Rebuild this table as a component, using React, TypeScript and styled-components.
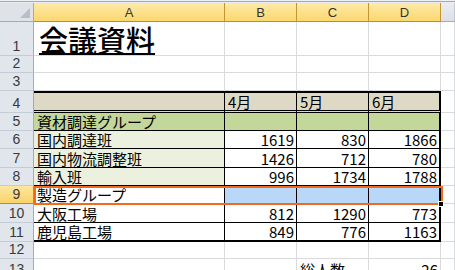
import React from "react";
import styled, { createGlobalStyle } from "styled-components";

const GlobalStyle = createGlobalStyle`
  html, body { margin: 0; padding: 0; background: #fff; }
  body { font-family: "Noto Sans CJK JP", "Liberation Sans", sans-serif; }
`;

const GRID = "1px solid #d9dadb";
const INK = "1px solid #000";
const BEIGE = "#ddd9c4";
const GREEN = "#c4d79b";
const PALE = "#ebf1de";
const BLUE = "#b9d8f9";

const rowHeights = [34, 17, 18, 22, 18, 18, 19, 18, 18, 19, 19, 17, 20];

type Row = {
  cells: (string | number)[];
  fill?: string[];
};

// rows 4..11 make up the table
const tableRows: Record<number, Row> = {
  4: { cells: ["", "4月", "5月", "6月"], fill: [BEIGE, BEIGE, BEIGE, BEIGE] },
  5: { cells: ["資材調達グループ", "", "", ""], fill: [GREEN, GREEN, GREEN, GREEN] },
  6: { cells: ["国内調達班", 1619, 830, 1866], fill: [PALE] },
  7: { cells: ["国内物流調整班", 1426, 712, 780], fill: [PALE] },
  8: { cells: ["輸入班", 996, 1734, 1788], fill: [PALE] },
  9: { cells: ["製造グループ", "", "", ""], fill: ["#fff", BLUE, BLUE, BLUE] },
  10: { cells: ["大阪工場", 812, 1290, 773] },
  11: { cells: ["鹿児島工場", 849, 776, 1163] },
};

export default function App() {
  return (
    <>
      <GlobalStyle />
      <Page>
        <TopBar />
        <Sheet $rows={rowHeights}>
          <Corner>
            <svg width="10" height="10" viewBox="0 0 10 10">
              <polygon points="10,0 10,10 0,10" fill="#b7bec8" />
            </svg>
          </Corner>
          {["A", "B", "C", "D"].map((c) => (
            <ColHead key={c} $selected>
              {c}
            </ColHead>
          ))}
          <ColHead />

          {rowHeights.map((_, i) => {
            const r = i + 1;
            const gr = r + 1; // grid row, header is row 1
            const t = tableRows[r];
            return (
              <React.Fragment key={r}>
                <RowHead $row={gr} $selected={r === 9}>
                  {r}
                </RowHead>
                {[0, 1, 2, 3].map((c) => {
                  const gc = c + 2;
                  if (r === 1 && c === 0) {
                    return (
                      <TitleCell key={c} $row={gr} $col={gc}>
                        会議資料
                      </TitleCell>
                    );
                  }
                  if (!t) {
                    let text: string | number = "";
                    if (r === 13 && c === 2) text = "総人数";
                    if (r === 13 && c === 3) text = 26;
                    return (
                      <Cell
                        key={c}
                        $row={gr}
                        $col={gc}
                        $align={typeof text === "number" ? "right" : "left"}
                      >
                        {text}
                      </Cell>
                    );
                  }
                  const v = t.cells[c];
                  return (
                    <Cell
                      key={c}
                      $row={gr}
                      $col={gc}
                      $bg={t.fill?.[c]}
                      $align={typeof v === "number" ? "right" : "left"}
                      $right={c === 3 ? "2px solid #000" : INK}
                      $top={r === 4 ? "2px solid #000" : undefined}
                      $bottom={
                        r === 4 ? "3px double #000" : r === 11 ? "2px solid #000" : INK
                      }
                    >
                      {v}
                    </Cell>
                  );
                })}
                <Cell $row={gr} $col={6} />
              </React.Fragment>
            );
          })}

          <Selection>
            <FillHandle />
          </Selection>
        </Sheet>
      </Page>
    </>
  );
}

const Page = styled.div`
  width: 455px;
  height: 270px;
  overflow: hidden;
  background: #fff;
`;

const TopBar = styled.div`
  height: 3px;
  background: linear-gradient(#eef0f3 0 1px, #a3aab3 1px 2px, #e9ecf0 2px);
`;

const Sheet = styled.div<{ $rows: number[] }>`
  display: grid;
  grid-template-columns: 34px 191px 72px 72px 72px 1fr;
  grid-template-rows: 19px ${(p) => p.$rows.map((h) => `${h}px`).join(" ")};
  color: #000;
`;

const Corner = styled.div`
  grid-row: 1;
  grid-column: 1;
  box-sizing: border-box;
  background: #dfe3e8;
  border-right: 1px solid #9eacbb;
  border-bottom: 1px solid #9eacbb;
  display: flex;
  align-items: flex-end;
  justify-content: flex-end;
  padding: 0 3px 3px 0;
`;

const ColHead = styled.div<{ $selected?: boolean }>`
  grid-row: 1;
  box-sizing: border-box;
  display: flex;
  align-items: center;
  justify-content: center;
  font-family: "Liberation Sans", sans-serif;
  font-size: 13px;
  color: #333;
  background: ${(p) =>
    p.$selected ? "linear-gradient(#fdeaa9, #fbd86e)" : "linear-gradient(#e9ecf0, #dde1e6)"};
  border-right: 1px solid ${(p) => (p.$selected ? "#c6952f" : "#c3cad3")};
  border-bottom: 1px solid ${(p) => (p.$selected ? "#c28b27" : "#9eacbb")};
`;

const RowHead = styled.div<{ $row: number; $selected?: boolean }>`
  grid-row: ${(p) => p.$row};
  grid-column: 1;
  box-sizing: border-box;
  display: flex;
  align-items: flex-end;
  justify-content: center;
  padding-bottom: 1px;
  font-family: "Liberation Sans", sans-serif;
  font-size: 14px;
  line-height: 16px;
  color: #3a3a3a;
  background: ${(p) => (p.$selected ? "linear-gradient(#fde6a0, #fad46a)" : "#e1e6ec")};
  border-right: 1px solid ${(p) => (p.$selected ? "#c28b27" : "#9eacbb")};
  border-bottom: 1px solid ${(p) => (p.$selected ? "#c28b27" : "#c4ccd5")};
`;

const Cell = styled.div<{
  $row: number;
  $col: number;
  $bg?: string;
  $align?: "left" | "right";
  $right?: string;
  $top?: string;
  $bottom?: string;
}>`
  grid-row: ${(p) => p.$row};
  grid-column: ${(p) => p.$col};
  box-sizing: border-box;
  min-width: 0;
  display: flex;
  align-items: flex-end;
  justify-content: ${(p) => (p.$align === "right" ? "flex-end" : "flex-start")};
  padding: 0 2px 0 3px;
  background: ${(p) => p.$bg || "#fff"};
  border-right: ${(p) => p.$right || GRID};
  border-bottom: ${(p) => p.$bottom || GRID};
  border-top: ${(p) => p.$top || "none"};
  font-size: 15px;
  line-height: 17px;
  white-space: nowrap;
  overflow: hidden;
`;

const TitleCell = styled(Cell)`
  font-size: 29px;
  line-height: 32px;
  font-weight: 500;
  padding-left: 5px;
  text-decoration: underline;
  text-decoration-thickness: 2px;
  text-underline-offset: 1px;
`;

const Selection = styled.div`
  grid-column: 2 / 6;
  grid-row: 10;
  position: relative;
  z-index: 2;
  box-sizing: border-box;
  border: 2px solid #f26a1b;
  margin: 0 -2px -1px 0;
  pointer-events: none;
`;

const FillHandle = styled.div`
  position: absolute;
  right: -3px;
  bottom: -4px;
  width: 4px;
  height: 4px;
  background: #000;
  border: 1px solid #fff;
`;
